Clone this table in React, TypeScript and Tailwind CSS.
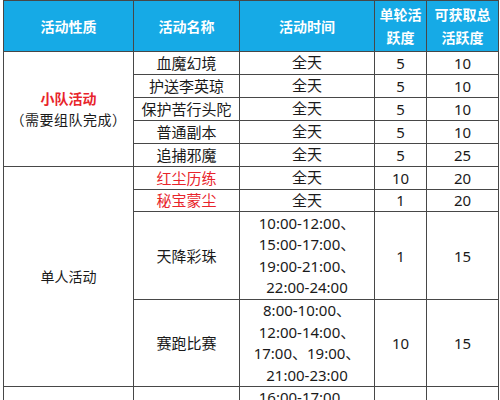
const font = { fontFamily: '"Noto Sans", "Noto Sans CJK SC", sans-serif' };

type Row = {
  name: string;
  time: string[];
  per: string;
  total: string;
  red?: boolean;
  h: string;
};

const TEAM: Row[] = [
  { name: "血魔幻境", time: ["全天"], per: "5", total: "10", h: "h-[23px]" },
  { name: "护送李英琼", time: ["全天"], per: "5", total: "10", h: "h-[23px]" },
  { name: "保护苦行头陀", time: ["全天"], per: "5", total: "10", h: "h-[23px]" },
  { name: "普通副本", time: ["全天"], per: "5", total: "10", h: "h-[23px]" },
  { name: "追捕邪魔", time: ["全天"], per: "5", total: "25", h: "h-[23px]" },
];

const SOLO: Row[] = [
  { name: "红尘历练", time: ["全天"], per: "10", total: "20", red: true, h: "h-[22px]" },
  { name: "秘宝蒙尘", time: ["全天"], per: "1", total: "20", red: true, h: "h-[22px]" },
  {
    name: "天降彩珠",
    time: ["10:00-12:00、", "15:00-17:00、", "19:00-21:00、", "22:00-24:00"],
    per: "1",
    total: "15",
    h: "h-[88px]",
  },
  {
    name: "赛跑比赛",
    time: ["8:00-10:00、", "12:00-14:00、", "17:00、19:00、", "21:00-23:00"],
    per: "10",
    total: "15",
    h: "h-[86px]",
  },
];

const td = "border border-[#474747] text-center align-middle p-0";

function Cells({ row }: { row: Row }) {
  return (
    <>
      <td className={`${td} ${row.red ? "text-[#e8242b]" : "text-[#1a1a1a]"}`}>{row.name}</td>
      <td className={`${td} leading-[21.5px]`}>
        {row.time.map((t) => (
          <div key={t}>{t}</div>
        ))}
      </td>
      <td className={td}>{row.per}</td>
      <td className={td}>{row.total}</td>
    </>
  );
}

export default function App() {
  return (
    <div className="w-[500px] h-[400px] overflow-hidden bg-white" style={font}>
      <table className="ml-[3px] border-collapse table-fixed w-[495px] text-[15px] leading-[20px] text-[#1a1a1a]">
        <colgroup>
          <col className="w-[130px]" />
          <col className="w-[106px]" />
          <col className="w-[135px]" />
          <col className="w-[52px]" />
          <col className="w-[72px]" />
        </colgroup>
        <thead>
          <tr className="h-[51px] bg-[#16aae6] text-white text-[14px] font-bold leading-[23px]">
            <th className={td}>活动性质</th>
            <th className={td}>活动名称</th>
            <th className={td}>活动时间</th>
            <th className={td}>
              单轮活
              <br />
              跃度
            </th>
            <th className={td}>
              可获取总
              <br />
              活跃度
            </th>
          </tr>
        </thead>
        <tbody>
          {TEAM.map((row, i) => (
            <tr key={row.name} className={row.h}>
              {i === 0 && (
                <td rowSpan={TEAM.length} className={`${td} text-[14px] leading-[21px]`}>
                  <div className="font-bold text-[#e8242b]">小队活动</div>
                  <div className="tracking-[0.5px]">（需要组队完成）</div>
                </td>
              )}
              <Cells row={row} />
            </tr>
          ))}
          {SOLO.map((row, i) => (
            <tr key={row.name} className={row.h}>
              {i === 0 && (
                <td rowSpan={SOLO.length} className={`${td} text-[14px]`}>
                  单人活动
                </td>
              )}
              <Cells row={row} />
            </tr>
          ))}
          <tr className="h-[44px]">
            <td className={td}></td>
            <td className={td}></td>
            <td className={`${td} align-top leading-[21.5px]`}>
              <div>16:00-17:00、</div>
              <div>20:00-21:00</div>
            </td>
            <td className={td}></td>
            <td className={td}></td>
          </tr>
        </tbody>
      </table>
    </div>
  );
}
